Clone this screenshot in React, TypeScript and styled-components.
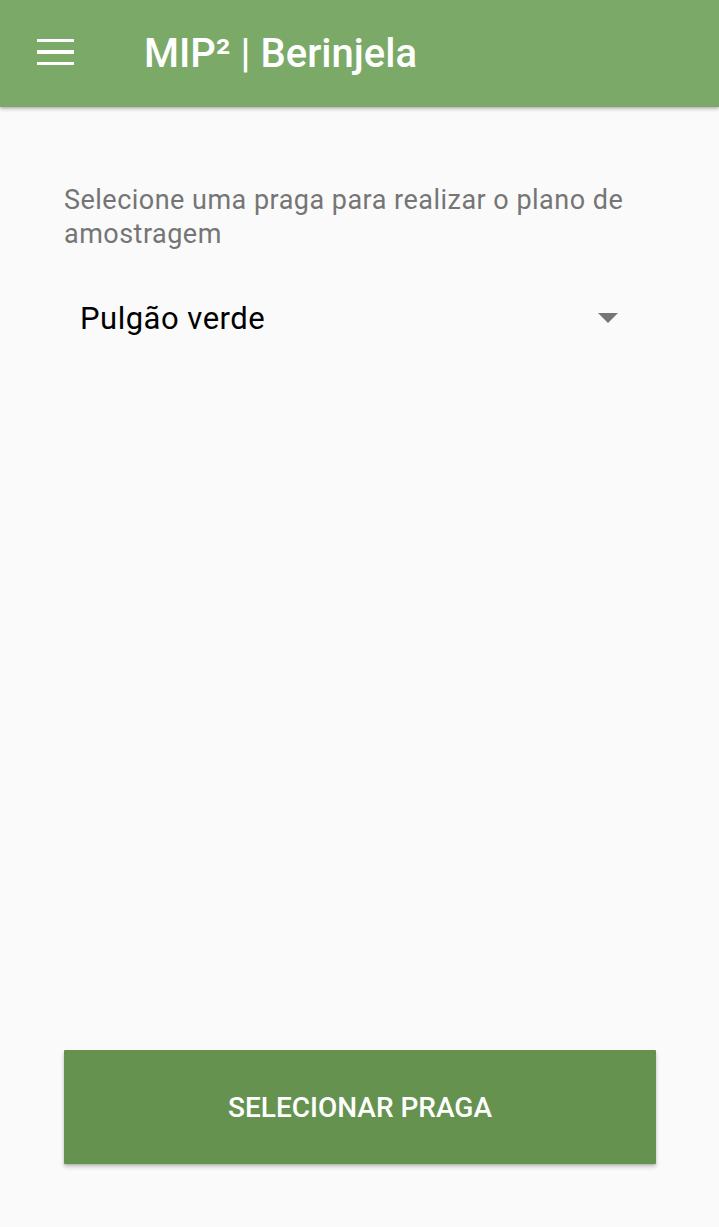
import React from "react";
import styled, { createGlobalStyle } from "styled-components";

const GlobalStyle = createGlobalStyle`
  html, body {
    margin: 0;
    padding: 0;
    background: #fafafa;
  }
  body {
    font-family: Roboto, "Noto Sans", "Liberation Sans", sans-serif;
  }
  * { box-sizing: border-box; }
`;

const Screen = styled.div`
  min-height: 1227px;
  display: flex;
  flex-direction: column;
  background: #fafafa;
`;

const AppBar = styled.header`
  height: 107px;
  flex: none;
  display: flex;
  align-items: center;
  padding-left: 37px;
  background: #7baa68;
  box-shadow: 0 2px 4px rgba(0, 0, 0, 0.22), 0 1px 2px rgba(0, 0, 0, 0.12);
  position: relative;
  z-index: 1;
`;

const MenuButton = styled.button`
  width: 37px;
  height: 26px;
  padding: 0;
  border: none;
  background: transparent;
  display: flex;
  flex-direction: column;
  justify-content: space-between;
  margin-top: -3px;
`;

const MenuLine = styled.span`
  display: block;
  height: 3.4px;
  width: 100%;
  background: #ffffff;
`;

const Title = styled.h1`
  margin: 0 0 0 70px;
  font-family: Roboto, "Liberation Sans", sans-serif;
  font-weight: 500;
  font-size: 40px;
  line-height: 44px;
  color: #ffffff;
  letter-spacing: 0;
`;

const Content = styled.main`
  flex: 1;
  display: flex;
  flex-direction: column;
  padding: 76px 63px 63px 64px;
`;

const Prompt = styled.p`
  margin: 0;
  font-size: 27px;
  line-height: 34px;
  letter-spacing: 0.48px;
  color: #757575;
`;

const Spinner = styled.div`
  margin-top: 50px;
  display: flex;
  align-items: center;
  justify-content: space-between;
  padding-left: 16px;
  padding-right: 38px;
`;

const SpinnerValue = styled.span`
  font-size: 31px;
  line-height: 36px;
  letter-spacing: 0.5px;
  color: #000000;
`;

const Caret = styled.svg`
  width: 20px;
  height: 10px;
  margin-bottom: 3px;
`;

const PrimaryButton = styled.button`
  margin-top: auto;
  height: 114px;
  width: 100%;
  border: none;
  border-radius: 1px;
  background: #65924f;
  color: #ffffff;
  font-family: Roboto, "Liberation Sans", sans-serif;
  font-weight: 500;
  font-size: 28px;
  letter-spacing: 0;
  text-transform: uppercase;
  box-shadow: 0 3px 4px rgba(0, 0, 0, 0.2), 0 1px 2px rgba(0, 0, 0, 0.12);
`;

export default function App() {
  return (
    <>
      <GlobalStyle />
      <Screen>
        <AppBar>
          <MenuButton aria-label="Menu">
            <MenuLine />
            <MenuLine />
            <MenuLine />
          </MenuButton>
          <Title>MIP² | Berinjela</Title>
        </AppBar>
        <Content>
          <Prompt>Selecione uma praga para realizar o plano de amostragem</Prompt>
          <Spinner>
            <SpinnerValue>Pulgão verde</SpinnerValue>
            <Caret viewBox="0 0 20 10">
              <path d="M0 0 L20 0 L10 10 Z" fill="#757575" />
            </Caret>
          </Spinner>
          <PrimaryButton>Selecionar praga</PrimaryButton>
        </Content>
      </Screen>
    </>
  );
}
